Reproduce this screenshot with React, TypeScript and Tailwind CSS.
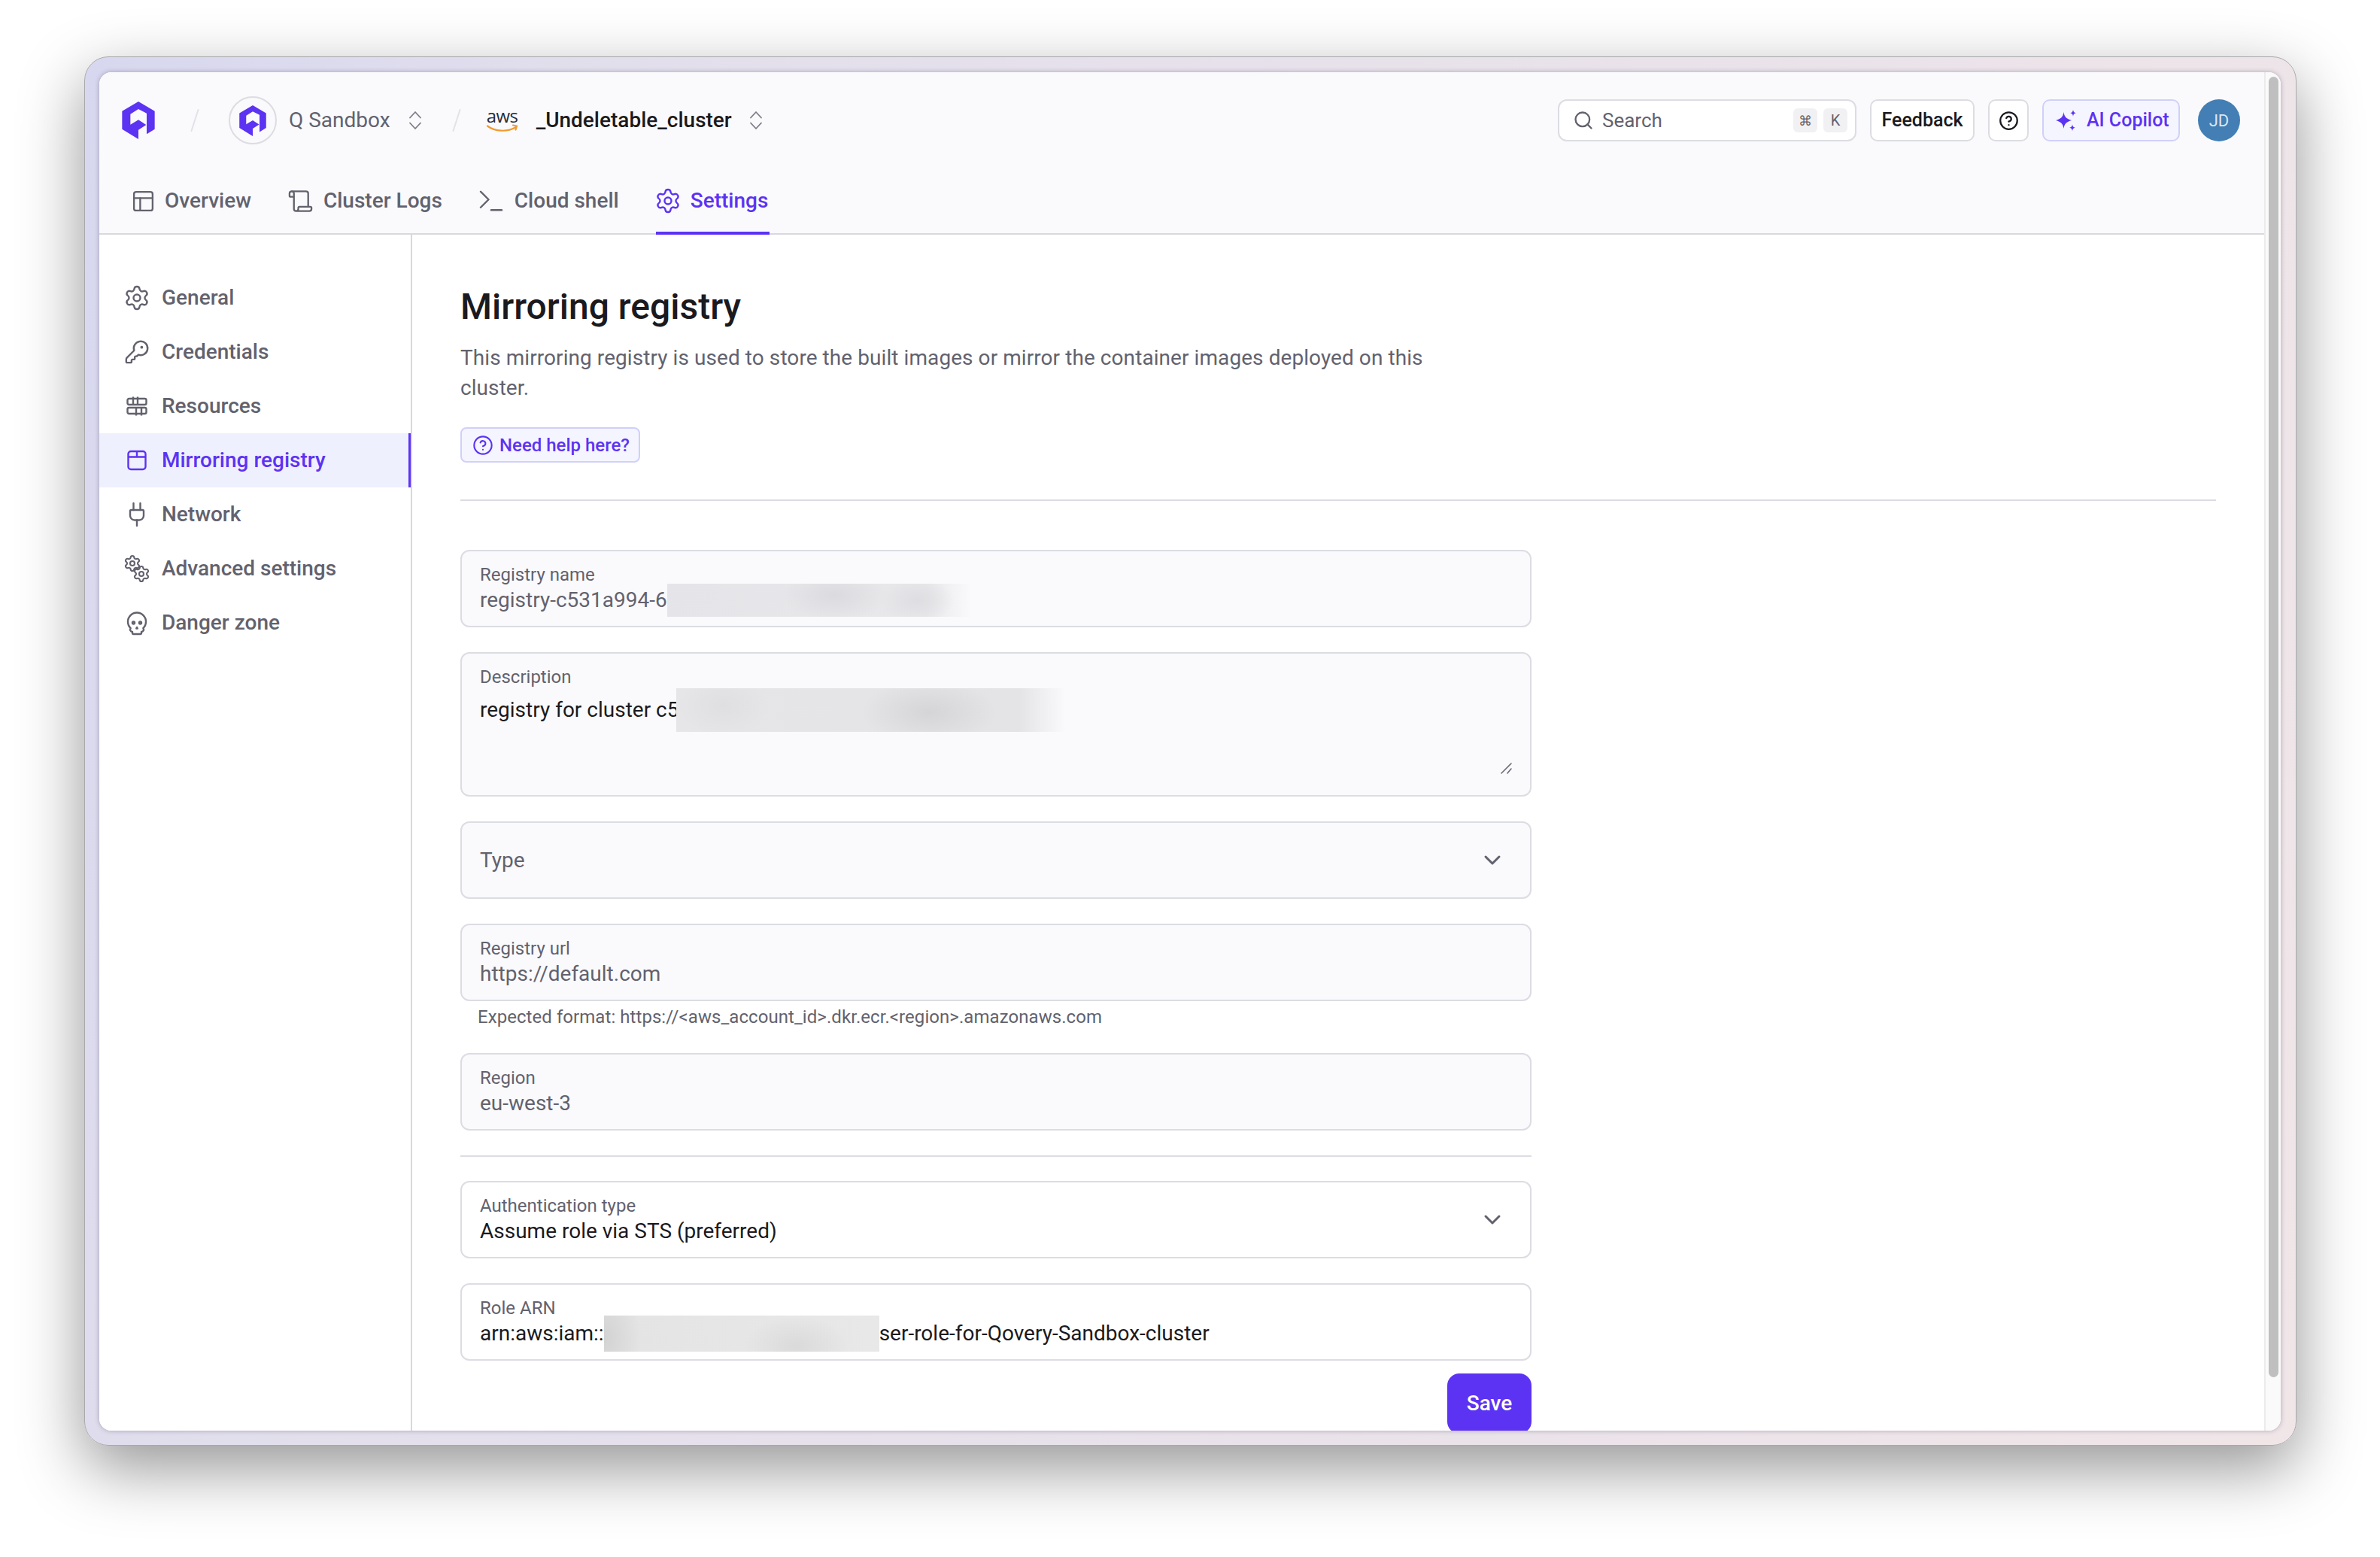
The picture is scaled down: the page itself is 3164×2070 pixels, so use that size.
import type { ReactNode } from 'react';
import {
    CircleHelp,
    KeyRound,
    PanelsTopLeft,
    Plug,
    Scroll,
    Search,
    Settings,
    Skull,
    Terminal,
} from 'lucide-react';

function QoveryLogo({ className }: { className: string }) {
    return (
        <svg className={className} viewBox="0 0 130 150" fill="#5c33f3">
            <polygon points="65,0 130,38 130,110 98,130 98,47 65,30 33,50 33,92 65,73 96,93 65,113 65,150 0,110 0,38" />
        </svg>
    );
}

function Slash() {
    return (
        <svg className="w-[12px] h-[30px] shrink-0" viewBox="0 0 12 30" fill="none">
            <line x1="10.5" y1="1" x2="1.5" y2="29" stroke="#e2e2e7" strokeWidth="2" strokeLinecap="round" />
        </svg>
    );
}

function UpDown() {
    return (
        <svg className="w-[18px] h-[26px] shrink-0" viewBox="0 0 18 26" fill="none" stroke="#7d7d88" strokeWidth="1.8" strokeLinecap="round" strokeLinejoin="round">
            <path d="M2 9.5 9 2l7 7.5" />
            <path d="M2 16.5 9 24l7-7.5" />
        </svg>
    );
}

function Down() {
    return (
        <svg className="w-[24px] h-[15px] shrink-0" viewBox="0 0 24 15" fill="none" stroke="#62626e" strokeWidth="3" strokeLinecap="round" strokeLinejoin="round">
            <path d="M3 3l9 9 9-9" />
        </svg>
    );
}

function ResourcesIcon() {
    return (
        <svg className="w-[28px] h-[28px]" viewBox="0 0 28 28" fill="none" stroke="currentColor" strokeWidth="2.4" strokeLinejoin="round">
            <rect x="1.5" y="4" width="25" height="8" rx="2" />
            <rect x="1.5" y="16" width="25" height="8" rx="2" />
            <path d="M9 1.5V12M15 1.5V12M13 16v10.5M20 16v10.5" />
        </svg>
    );
}

function BoxIcon() {
    return (
        <svg className="w-[28px] h-[28px]" viewBox="0 0 28 28" fill="none" stroke="currentColor" strokeWidth="2.4" strokeLinejoin="round">
            <rect x="2.5" y="2" width="23" height="24" rx="3.5" />
            <path d="M2.5 9.5h23M14 2v7.5" />
        </svg>
    );
}

function GearsIcon() {
    return (
        <span className="relative w-[34px] h-[34px] block">
            <Settings className="absolute -left-[2px] -top-[2px]" size={24} strokeWidth={2.1} />
            <Settings className="absolute -right-[2px] -bottom-[2px]" size={24} strokeWidth={2.1} />
        </span>
    );
}

function Sparkle() {
    return (
        <svg className="w-[28px] h-[28px] shrink-0" viewBox="0 0 28 28" fill="#5c33f3">
            <path d="M10.500 3C11.500 9.500 14 12 21 14c-7 2-9.500 4.500-10.500 11C9.500 18.500 7 16 0 14c7-2 9.500-4.500 10.500-11Z" />
            <path d="M23 0c.5 2.800 1.400 3.700 3.800 4.300-2.400.6-3.300 1.500-3.800 4.300-.5-2.800-1.400-3.700-3.800-4.300 2.400-.6 3.300-1.500 3.800-4.300Z" />
            <path d="M22 19.400c.5 2.800 1.400 3.700 3.800 4.300-2.400.6-3.300 1.500-3.800 4.300-.5-2.800-1.400-3.700-3.800-4.300 2.400-.6 3.300-1.500 3.800-4.300Z" />
        </svg>
    );
}

function AwsLogo() {
    return (
        <div className="flex flex-col items-center w-[42px] shrink-0">
            <span className="text-[24px] leading-[20px] text-[#252f3e] tracking-[-0.5px] font-['Open_Sans',sans-serif]">aws</span>
            <svg className="w-[42px] h-[12px] mt-[1px]" viewBox="0 0 42 12" fill="none" stroke="#f29a2e" strokeWidth="2.200" strokeLinecap="round">
                <path d="M1 2.500c10 7.500 26 8.500 38 1.500" />
                <path d="M35 1.500l5 1-1.500 5" />
            </svg>
        </div>
    );
}

function Field({
    label,
    children,
    muted = true,
    white = false,
    className = 'h-[103px]',
}: {
    label: string;
    children: ReactNode;
    muted?: boolean;
    white?: boolean;
    className?: string;
}) {
    return (
        <div
            className={`relative border-2 border-[#dcdce3] rounded-[12px] pl-[24px] pr-[36px] pt-[14px] ${
                white ? 'bg-white' : 'bg-[#fafafc]'
            } ${className}`}
        >
            <div className="text-[24px] leading-[34px] text-[#62626e]">{label}</div>
            <div className={`text-[28px] leading-[34px] flex items-center whitespace-nowrap ${muted ? 'text-[#62626e]' : 'text-[#1a1a20]'}`}>
                {children}
            </div>
        </div>
    );
}

const tabs = [
    { label: 'Overview', box: 'w-[26px]', icon: <PanelsTopLeft className="shrink-0" size={33} strokeWidth={1.7} /> },
    { label: 'Cluster Logs', box: 'w-[29px]', icon: <Scroll className="shrink-0" size={35} strokeWidth={1.6} /> },
    { label: 'Cloud shell', box: 'w-[29px]', icon: <Terminal className="shrink-0" size={42} strokeWidth={1.4} /> },
    { label: 'Settings', box: 'w-[28px]', icon: <Settings className="shrink-0" size={36} strokeWidth={1.6} />, active: true },
];

const sideItems = [
    { label: 'General', icon: <Settings className="shrink-0" size={36} strokeWidth={1.6} /> },
    { label: 'Credentials', icon: <KeyRound className="shrink-0" size={34} strokeWidth={1.7} /> },
    { label: 'Resources', icon: <ResourcesIcon /> },
    { label: 'Mirroring registry', icon: <BoxIcon />, active: true },
    { label: 'Network', icon: <Plug className="shrink-0" size={36} strokeWidth={1.6} /> },
    { label: 'Advanced settings', icon: <GearsIcon /> },
    { label: 'Danger zone', icon: <Skull className="shrink-0" size={36} strokeWidth={1.6} /> },
];

export default function App() {
    return (
        <div className="w-[3164px] h-[2070px] bg-white pl-[112px] pt-[75px] overflow-hidden font-['Roboto',sans-serif]">
            <div className="w-[2941px] h-[1847px] pl-[19px] pr-[20px] pt-[20px] pb-[19px] rounded-[32px] border border-[#a8a8ac] shadow-[0_30px_85px_rgba(0,0,0,0.42)] bg-[linear-gradient(105deg,#d7d7ef_0%,#e2dfec_20%,#e9e2ea_60%,#f0e6e8_100%)]">
                <div className="w-full h-full rounded-[16px] overflow-hidden flex bg-white shadow-[0_0_6px_rgba(60,50,80,0.35)]">
                    <div className="flex-1 min-w-0 flex flex-col">
                        {/* header */}
                        <div className="h-[216px] shrink-0 bg-[#fafafc] border-b-2 border-[#d8d8de] flex flex-col">
                            <div className="h-[128px] shrink-0 flex items-center pl-[30px] pr-[32px]">
                                <QoveryLogo className="w-[44px] h-[50px] shrink-0" />
                                <div className="ml-[47px]">
                                    <Slash />
                                </div>
                                <div className="ml-[39px] w-[64px] h-[64px] rounded-full border-2 border-[#dcdce3] flex items-center justify-center shrink-0">
                                    <QoveryLogo className="w-[36px] h-[41px]" />
                                </div>
                                <span className="ml-[16px] text-[28px] text-[#62626e]">Q Sandbox</span>
                                <div className="ml-[24px]">
                                    <UpDown />
                                </div>
                                <div className="ml-[40px]">
                                    <Slash />
                                </div>
                                <div className="ml-[34px]">
                                    <AwsLogo />
                                </div>
                                <span className="ml-[24px] text-[28px] font-medium text-[#1a1a20]">_Undeletable_cluster</span>
                                <div className="ml-[23px]">
                                    <UpDown />
                                </div>

                                <div className="ml-auto flex items-center gap-[18px]">
                                    <div className="w-[397px] h-[56px] bg-white border-2 border-[#dcdce3] rounded-[12px] flex items-center pl-[18px] pr-[10px] text-[#62626e]">
                                        <Search size={28} strokeWidth={2} />
                                        <span className="ml-[11px] text-[26px]">Search</span>
                                        <span className="ml-auto w-[32px] h-[32px] rounded-[6px] bg-[#f1f1f4] flex items-center justify-center text-[18px]">⌘</span>
                                        <span className="ml-[8px] w-[32px] h-[32px] rounded-[6px] bg-[#f1f1f4] flex items-center justify-center text-[20px]">K</span>
                                    </div>
                                    <div className="w-[139px] h-[56px] bg-white border-2 border-[#dcdce3] rounded-[10px] flex items-center justify-center text-[25px] font-medium text-[#1a1a20]">
                                        Feedback
                                    </div>
                                    <div className="w-[54px] h-[56px] bg-white border-2 border-[#dcdce3] rounded-[10px] flex items-center justify-center text-[#1a1a20]">
                                        <CircleHelp size={27} strokeWidth={2} />
                                    </div>
                                    <div className="w-[183px] h-[56px] bg-[#f5f5ff] border-2 border-[#d0d0fa] rounded-[10px] flex items-center pl-[16px] gap-[13px] text-[25px] font-medium text-[#5c33f3] whitespace-nowrap">
                                        <Sparkle />
                                        AI Copilot
                                    </div>
                                    <div className="ml-[6px] w-[56px] h-[56px] rounded-full bg-[#437eb4] flex items-center justify-center text-[22px] text-[#dbe6f1]">
                                        JD
                                    </div>
                                </div>
                            </div>
                            <div className="flex-1 flex items-stretch gap-[47px] pl-[43px] -mb-[2px]">
                                {tabs.map((t) => (
                                    <div
                                        key={t.label}
                                        className={`flex items-center gap-[16px] px-[2px] pt-[2px] text-[28px] font-medium border-b-4 ${
                                            t.active ? 'border-[#5c33f3] text-[#5c33f3]' : 'border-transparent text-[#62626e]'
                                        }`}
                                    >
                                        <span className={`${t.box} flex justify-center`}>{t.icon}</span>
                                        {t.label}
                                    </div>
                                ))}
                            </div>
                        </div>

                        {/* body */}
                        <div className="flex-1 min-h-0 flex bg-white overflow-hidden">
                            <div className="w-[416px] shrink-0 border-r-2 border-[#d8d8de] pt-[48px]">
                                {sideItems.map((item) => (
                                    <div
                                        key={item.label}
                                        className={`h-[72px] flex items-center pl-[34px] text-[28px] font-medium ${
                                            item.active
                                                ? 'bg-[#eff0fe] text-[#5c33f3] border-r-[3px] border-[#5c33f3]'
                                                : 'text-[#62626e]'
                                        }`}
                                    >
                                        <span className="w-[32px] flex justify-center">{item.icon}</span>
                                        <span className="ml-[17px]">{item.label}</span>
                                    </div>
                                ))}
                            </div>

                            <div className="flex-1 min-w-0 pl-[64px] pr-[64px] pt-[64px] overflow-hidden">
                                <h1 className="text-[48px] leading-[64px] font-medium text-[#1a1a20]">Mirroring registry</h1>
                                <p className="mt-[16px] w-[1296px] text-[28px] leading-[40px] tracking-[0.07px] text-[#62626e]">
                                    This mirroring registry is used to store the built images or mirror the container images deployed on this cluster.
                                </p>
                                <div className="mt-[32px] w-fit h-[47px] flex items-center gap-[8px] pl-[14px] pr-[12px] bg-[#f5f5ff] border-2 border-[#d0d0fa] rounded-[8px] text-[24px] font-medium text-[#5c33f3]">
                                    <CircleHelp size={28} strokeWidth={1.8} />
                                    Need help here?
                                </div>
                                <div className="mt-[49px] h-[2px] bg-[#dcdce3]"></div>

                                <div className="mt-[65px] w-[1424px] flex flex-col gap-[33px]">
                                    <Field label="Registry name">
                                        registry-c531a994-6
                                        <span className="inline-block w-[405px] h-[44px] -my-[8px] bg-[radial-gradient(ellipse_70px_34px_at_55%_35%,#dbdbdf_0%,rgba(219,219,223,0)_100%),radial-gradient(ellipse_50px_30px_at_82%_50%,#dedee2_0%,rgba(222,222,226,0)_100%),linear-gradient(90deg,#e5e5e9_0%,#e8e8eb_85%,#fafafc_100%)]"></span>
                                    </Field>
                                    <Field label="Description" muted={false} className="h-[192px]">
                                        <div className="mt-[10px] flex items-center">
                                            registry for cluster c5
                                            <span className="inline-block w-[518px] h-[58px] -my-[12px] -ml-[3px] bg-[radial-gradient(ellipse_90px_44px_at_65%_55%,#d5d5d8_0%,rgba(213,213,216,0)_100%),radial-gradient(ellipse_60px_40px_at_12%_40%,#dfdfe2_0%,rgba(223,223,226,0)_100%),linear-gradient(90deg,#e6e6e9_0%,#e4e4e7_88%,#fafafc_100%)]"></span>
                                        </div>
                                        <svg className="absolute right-[24px] bottom-[28px] w-[16px] h-[16px]" viewBox="0 0 16 16" fill="none" stroke="#6b6b75" strokeWidth="1.600" strokeLinecap="round">
                                            <path d="M2 15 15 2M10 15l5-6" />
                                        </svg>
                                    </Field>
                                    <div className="h-[103px] border-2 border-[#dcdce3] rounded-[12px] bg-[#fafafc] pl-[24px] pr-[38px] flex items-center justify-between text-[28px] text-[#62626e]">
                                        Type
                                        <Down />
                                    </div>
                                    <div>
                                        <Field label="Registry url">https://default.com</Field>
                                        <div className="mt-[6px] pl-[23px] text-[24px] leading-[30px] tracking-[0.06px] text-[#62626e]">
                                            {'Expected format: https://<aws_account_id>.dkr.ecr.<region>.amazonaws.com'}
                                        </div>
                                    </div>
                                    <Field label="Region">eu-west-3</Field>
                                    <div className="h-[2px] bg-[#dcdce3]"></div>
                                    <div className="-mt-[1px] h-[103px] border-2 border-[#dcdce3] rounded-[12px] bg-white pl-[24px] pr-[38px] pt-[14px] flex justify-between">
                                        <div>
                                            <div className="text-[24px] leading-[34px] text-[#62626e]">Authentication type</div>
                                            <div className="text-[28px] leading-[34px] text-[#1a1a20]">Assume role via STS (preferred)</div>
                                        </div>
                                        <div className="-mt-[14px] self-center">
                                            <Down />
                                        </div>
                                    </div>
                                    <Field label="Role ARN" muted={false} white>
                                        arn:aws:iam::
                                        <span className="inline-block w-[366px] h-[48px] -my-[8px] bg-[radial-gradient(ellipse_50px_70px_at_0%_60%,#d2d2d2_0%,rgba(210,210,210,0)_100%),radial-gradient(ellipse_70px_40px_at_70%_85%,#dadada_0%,rgba(218,218,218,0)_100%),linear-gradient(90deg,#e4e4e4,#e8e8e8)]"></span>
                                        ser-role-for-Qovery-Sandbox-cluster
                                    </Field>
                                    <div className="-mt-[16px] self-end w-[112px] h-[80px] rounded-[16px] bg-[#5c33f3] flex items-center justify-center text-[28px] font-medium text-white shrink-0">
                                        Save
                                    </div>
                                </div>
                            </div>
                        </div>
                    </div>

                    {/* scrollbar */}
                    <div className="w-[22px] shrink-0 bg-[#fafafa] border-l-2 border-[#ebebeb] pt-[6px] pl-[4px]">
                        <div className="w-[13px] h-[1729px] rounded-full bg-[#bfbfbf]"></div>
                    </div>
                </div>
            </div>
        </div>
    );
}
